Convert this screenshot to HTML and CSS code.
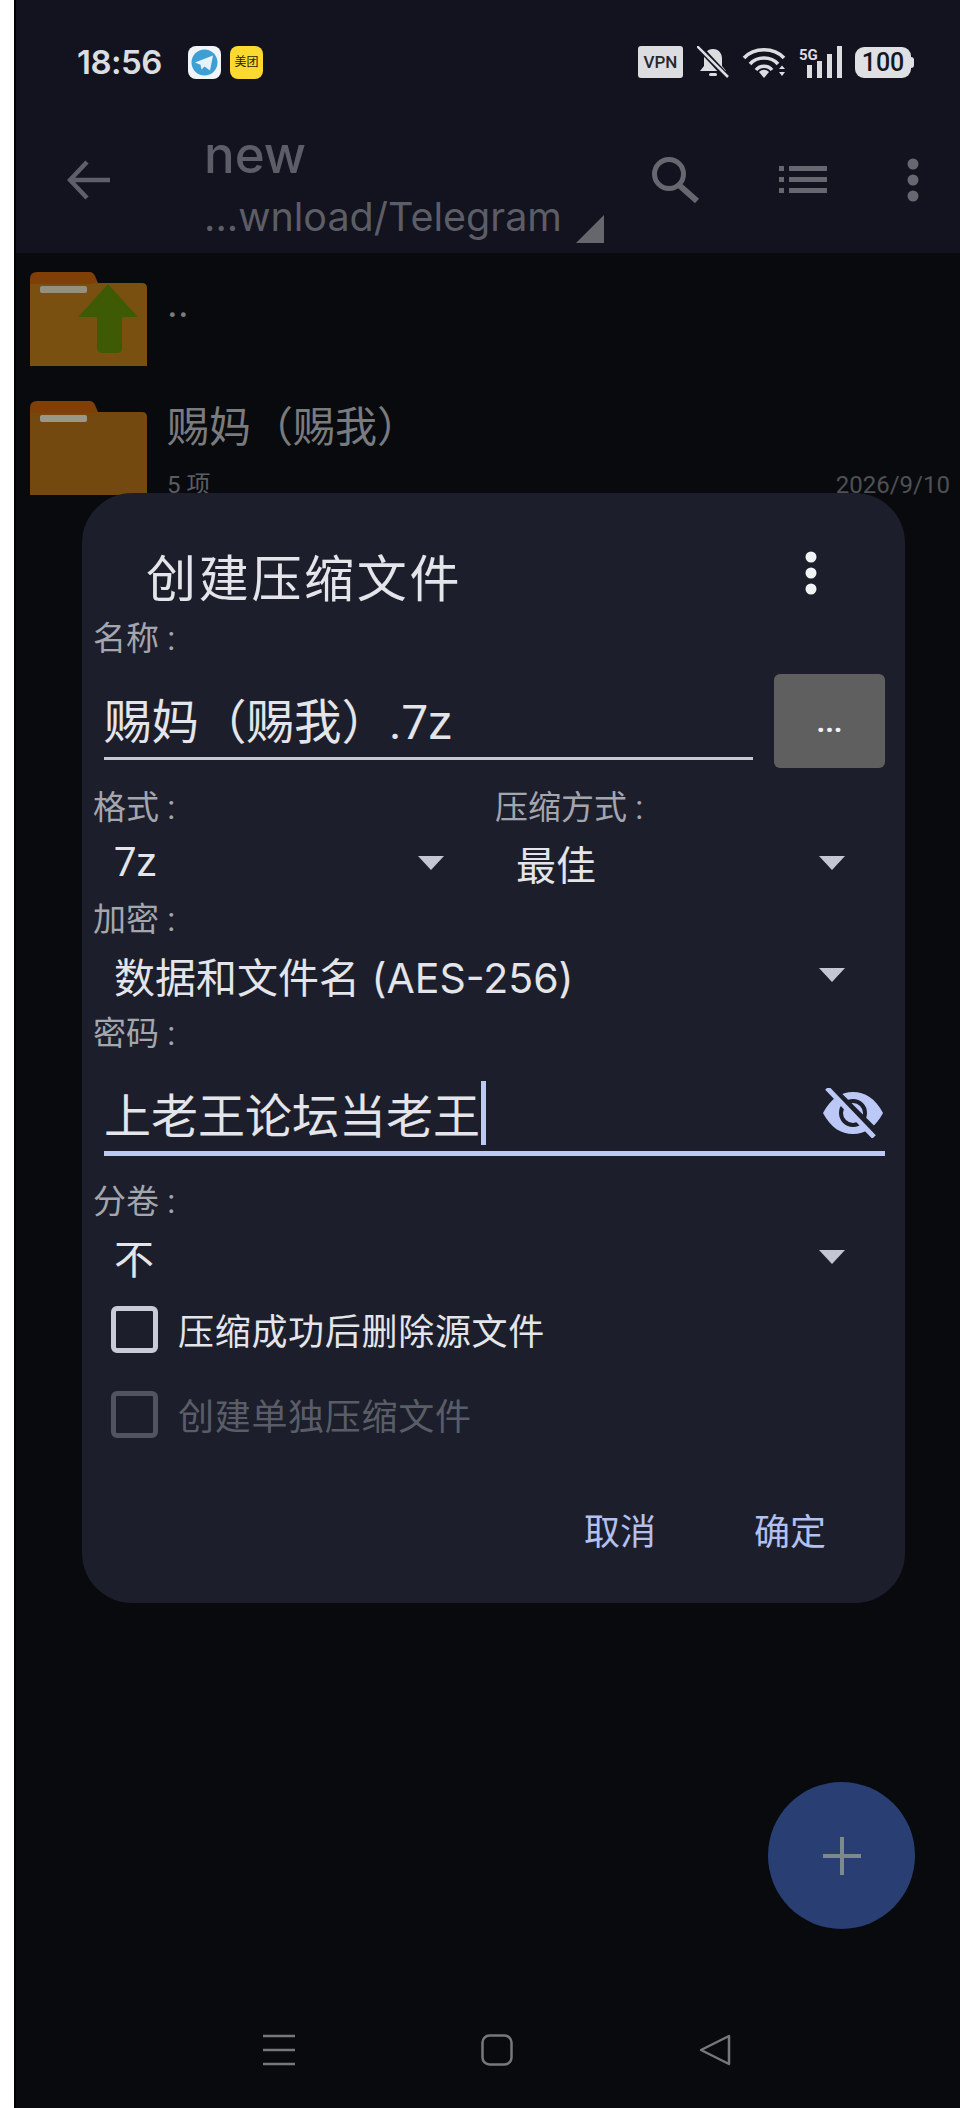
FILE: index.html
```html
<!DOCTYPE html>
<html lang="zh-CN">
<head>
    <meta charset="UTF-8">
    <meta name="viewport" content="width=device-width, initial-scale=1.0">
    <title>创建压缩文件</title>
    <link rel="stylesheet" href="styles.css">
</head>
<body>
    <div class="phone">
        <header class="appbar">
            <div class="status">
                <span class="time">18:56</span>
                <svg class="app-icon" viewBox="0 0 33 33">
                    <rect width="33" height="33" rx="8" fill="#f2f5f8"/>
                    <circle cx="16.5" cy="16.5" r="13" fill="#3f9fd4"/>
                    <path d="M7 16.5 25 9.5 22 24.5 16.5 20.5 13.5 23.5 12.5 18.8Z" fill="#e8f3f9"/>
                </svg>
                <span class="meituan">美团</span>
                <div class="status-right">
                    <span class="vpn">VPN</span>
                    <svg class="bell" viewBox="0 0 32 32">
                        <path d="M16 3c-6 0-9 4.500-9 10v7l-4 5h26l-4-5v-7c0-5.500-3-10-9-10Z" fill="#dcdde1"/>
                        <rect x="12" y="27" width="8" height="3" rx="1.500" fill="#dcdde1"/>
                        <path d="M1 0 31 32" stroke="#12131e" stroke-width="6"/>
                        <path d="M0 0 31 31" stroke="#dcdde1" stroke-width="2.500"/>
                    </svg>
                    <svg class="wifi" viewBox="0 0 45 32" fill="none" stroke="#dcdde1" stroke-width="3.500">
                        <path d="M2 12C12 1 32 1 42 12"/>
                        <path d="M8 18C15 10 29 10 36 18"/>
                        <path d="M14 24C18 19 26 19 30 24"/>
                        <path d="M17 26 22 32 27 26C24 23 20 23 17 26Z" fill="#dcdde1" stroke="none"/>
                        <path d="M37 23 40 19.500 43 23ZM37 26 40 30 43 26Z" fill="#dcdde1" stroke="none"/>
                    </svg>
                    <svg class="signal" viewBox="0 0 43 32">
                        <text x="0" y="14" class="signal-label">5G</text>
                        <rect x="8" y="19" width="5" height="13" fill="#dcdde1"/>
                        <rect x="18" y="15" width="5" height="17" fill="#dcdde1"/>
                        <rect x="28" y="8" width="5" height="24" fill="#dcdde1"/>
                        <rect x="38" y="0" width="5" height="32" fill="#dcdde1"/>
                    </svg>
                    <span class="battery">100</span>
                </div>
            </div>
            <div class="toolbar">
                <svg class="back" viewBox="0 0 43 40" fill="none" stroke="#5e5f68" stroke-width="4.500">
                    <path d="M43 20H4M20 2 3 20 20 38"/>
                </svg>
                <div class="path">
                    <div class="path-name">new</div>
                    <div class="path-dir">...wnload/Telegram</div>
                </div>
                <svg class="path-corner" viewBox="0 0 28 28"><path d="M28 0V28H0Z" fill="#66676c"/></svg>
                <svg class="search" viewBox="0 0 47 47" fill="none" stroke="#66676f" stroke-width="5">
                    <circle cx="17" cy="18" r="14.500"/>
                    <path d="M27 29 45 45" stroke-width="6"/>
                </svg>
                <svg class="view-list" viewBox="0 0 48 27" fill="#66676f">
                    <rect y="0" width="5" height="5"/><rect x="10" y="0" width="38" height="5"/>
                    <rect y="11" width="5" height="5"/><rect x="10" y="11" width="38" height="5"/>
                    <rect y="22" width="5" height="5"/><rect x="10" y="22" width="38" height="5"/>
                </svg>
                <svg class="more" viewBox="0 0 12 44" fill="#66676f">
                    <circle cx="6" cy="6" r="5.500"/><circle cx="6" cy="22" r="5.500"/><circle cx="6" cy="38" r="5.500"/>
                </svg>
            </div>
        </header>

        <main class="files">
            <div class="file-row">
                <svg class="folder" viewBox="0 0 117 94">
                    <path d="M0 7Q0 0 7 0H60Q63 0 65 4L68 11V30H0Z" fill="#7f3f06"/>
                    <path d="M0 25V12H60L66 11H112Q117 11 117 16V94H0Z" fill="#7a5011"/>
                    <rect x="10" y="14" width="47" height="7" rx="2" fill="#958f7c"/>
                    <path d="M78 12 108 45H92V76Q92 81 87 81H73Q67 81 67 76V45H48Z" fill="#3f5a05"/>
                </svg>
                <div class="file-text file-up">
                    <div class="file-name">..</div>
                </div>
            </div>
            <div class="file-row">
                <svg class="folder" viewBox="0 0 117 94">
                    <path d="M0 7Q0 0 7 0H60Q63 0 65 4L68 11V30H0Z" fill="#7f3f06"/>
                    <path d="M0 25V12H60L66 11H112Q117 11 117 16V94H0Z" fill="#74490f"/>
                    <rect x="10" y="14" width="47" height="7" rx="2" fill="#9a9688"/>
                </svg>
                <div class="file-text">
                    <div class="file-name">赐妈（赐我）</div>
                    <div class="file-meta">
                        <span>5 项</span>
                        <span class="file-date">2026/9/10</span>
                    </div>
                </div>
            </div>
        </main>

        <button class="fab" type="button">
            <svg viewBox="0 0 38 38" fill="none" stroke="#7c8a8c" stroke-width="4"><path d="M19 0V38M0 19H38"/></svg>
        </button>

        <nav class="navbar">
            <svg class="nav-icon" viewBox="0 0 32 32" fill="none" stroke="#77787c" stroke-width="2.500">
                <path d="M0 2H32M0 16H32M0 30H32"/>
            </svg>
            <svg class="nav-icon" viewBox="0 0 32 32" fill="none" stroke="#77787c" stroke-width="2.500">
                <rect x="1.500" y="1.500" width="29" height="29" rx="7"/>
            </svg>
            <svg class="nav-icon" viewBox="0 0 32 32" fill="none" stroke="#77787c" stroke-width="2.500" stroke-linejoin="round">
                <path d="M30 2 2 16 30 30Z"/>
            </svg>
        </nav>

        <section class="dialog">
            <div class="dialog-head">
                <h2 class="dialog-title">创建压缩文件</h2>
                <svg class="dialog-more" viewBox="0 0 12 44" fill="#f2f3f5">
                    <circle cx="6" cy="6" r="5.500"/><circle cx="6" cy="22" r="5.500"/><circle cx="6" cy="38" r="5.500"/>
                </svg>
            </div>

            <div class="label">名称 :</div>
            <div class="name-row">
                <div class="field">赐妈（赐我）.7z</div>
                <button class="browse" type="button">...</button>
            </div>

            <div class="two-col">
                <div>
                    <div class="label">格式 :</div>
                    <div class="select"><span>7z</span><i class="caret"></i></div>
                </div>
                <div>
                    <div class="label">压缩方式 :</div>
                    <div class="select"><span>最佳</span><i class="caret"></i></div>
                </div>
            </div>

            <div class="label">加密 :</div>
            <div class="select select-long"><span>数据和文件名 (AES-256)</span><i class="caret"></i></div>

            <div class="label label-password">密码 :</div>
            <div class="password">
                <span>上老王论坛当老王</span>
                <span class="cursor"></span>
                <svg class="eye" viewBox="0 0 60 50">
                    <path d="M0 25C8 10 18 4 30 4S52 10 60 25C52 40 42 46 30 46S8 40 0 25Z" fill="#bcc8f5"/>
                    <circle cx="30" cy="25" r="12" fill="none" stroke="#1c1f2b" stroke-width="4"/>
                    <path d="M3 -4 54 47" stroke="#1c1f2b" stroke-width="9"/>
                    <path d="M4 0 51 49" stroke="#bcc8f5" stroke-width="5"/>
                </svg>
            </div>

            <div class="label label-split">分卷 :</div>
            <div class="select"><span>不</span><i class="caret"></i></div>

            <label class="check">
                <span class="box"></span>
                <span>压缩成功后删除源文件</span>
            </label>
            <label class="check check-off">
                <span class="box"></span>
                <span>创建单独压缩文件</span>
            </label>

            <div class="actions">
                <span>取消</span>
                <span>确定</span>
            </div>
        </section>
    </div>
</body>
</html>
```

FILE: styles.css
```css
* {
    box-sizing: border-box;
}
body {
    margin: 0;
    background-color: #fff;
    font-family: Roboto, "Noto Sans CJK SC", sans-serif;
}
.phone {
    position: relative;
    display: flex;
    flex-direction: column;
    width: 946px;
    height: 2108px;
    margin-left: 14px;
    border-left: 2px solid #000;
    background-color: #090a0e;
    overflow: hidden;
}
.appbar {
    height: 253px;
    background-color: #12131e;
}
.status {
    display: flex;
    align-items: center;
    height: 124px;
    padding-left: 61px;
}
.time {
    width: 111px;
    font-family: Inter, sans-serif;
    font-size: 33px;
    font-weight: 600;
    letter-spacing: -0.5px;
    color: #dcdde1;
}
.app-icon {
    width: 33px;
    height: 33px;
}
.meituan {
    width: 33px;
    height: 33px;
    margin-left: 9px;
    border-radius: 8px;
    background-color: #fbd92f;
    color: #2a2500;
    font-size: 12px;
    line-height: 33px;
    text-align: center;
    white-space: nowrap;
}
.status-right {
    display: flex;
    align-items: center;
    margin-left: auto;
    margin-right: 46px;
}
.vpn {
    width: 45px;
    height: 32px;
    border-radius: 3px;
    background-color: #dcdde1;
    color: #26272c;
    font-size: 17px;
    font-weight: 500;
    line-height: 32px;
    text-align: center;
}
.bell {
    width: 32px;
    height: 32px;
    margin-left: 14px;
}
.wifi {
    width: 45px;
    height: 32px;
    margin-left: 13px;
}
.signal {
    width: 43px;
    height: 32px;
    margin-left: 12px;
}
.signal-label {
    font-family: Roboto, sans-serif;
    font-size: 15px;
    font-weight: 700;
    fill: #dcdde1;
}
.battery {
    position: relative;
    width: 56px;
    height: 31px;
    margin-left: 13px;
    margin-right: 3px;
    border-radius: 9px;
    background-color: #dfe0e4;
    color: #16171c;
    font-size: 25px;
    font-weight: 500;
    line-height: 31px;
    text-align: center;
}
.battery::after {
    content: "";
    position: absolute;
    top: 10px;
    right: -3px;
    width: 3px;
    height: 11px;
    border-radius: 0 3px 3px 0;
    background-color: #dfe0e4;
}
.toolbar {
    display: flex;
    align-items: flex-start;
    height: 129px;
    padding-left: 51px;
}
.back {
    width: 43px;
    height: 40px;
    margin-top: 36px;
}
.path {
    width: 372px;
    margin-left: 94px;
    color: #5c5d67;
}
.path-name {
    height: 60px;
    padding-top: 2px;
    font-family: Inter, sans-serif;
    font-size: 51px;
    font-weight: 500;
    line-height: 58px;
}
.path-dir {
    margin-top: 5px;
    font-family: Inter, sans-serif;
    font-size: 39.500px;
    line-height: 56px;
    white-space: nowrap;
}
.path-corner {
    width: 28px;
    height: 28px;
    margin-top: 91px;
}
.search {
    width: 47px;
    height: 47px;
    margin-top: 32px;
    margin-left: 48px;
}
.view-list {
    width: 48px;
    height: 27px;
    margin-top: 42px;
    margin-left: 80px;
}
.more {
    width: 12px;
    height: 44px;
    margin-top: 34px;
    margin-left: 80px;
}
.files {
    flex: 1;
    padding: 19px 10px 0 14px;
}
.file-row {
    display: flex;
    height: 129px;
}
.folder {
    width: 117px;
    height: 94px;
    flex: none;
}
.file-text {
    flex: 1;
    margin-left: 20px;
}
.file-up {
    padding-top: 4px;
}
.file-name {
    height: 66px;
    color: #7a7b7e;
    font-size: 42px;
    line-height: 54px;
}
.file-meta {
    display: flex;
    justify-content: space-between;
    color: #5b5c60;
    font-size: 24px;
    line-height: 36px;
}
.file-date {
    color: #4f5054;
}
.fab {
    position: absolute;
    top: 1782px;
    left: 752px;
    display: flex;
    align-items: center;
    justify-content: center;
    width: 147px;
    height: 147px;
    padding: 0;
    border: none;
    border-radius: 50%;
    background-color: #293f73;
}
.fab svg {
    width: 38px;
    height: 38px;
}
.navbar {
    display: flex;
    align-items: center;
    gap: 186px;
    height: 116px;
    padding-left: 247px;
}
.nav-icon {
    width: 32px;
    height: 32px;
}
.dialog {
    position: absolute;
    top: 493px;
    left: 66px;
    width: 823px;
    height: 1110px;
    padding: 55px 20px 0 11px;
    border-radius: 50px;
    background-color: #1c1f2b;
    color: #e4e5ea;
}
.dialog-head {
    display: flex;
    justify-content: space-between;
    height: 60px;
    margin-bottom: 11px;
    padding-left: 53px;
}
.dialog-title {
    margin: 0;
    padding-top: 2px;
    font-size: 50px;
    font-weight: 400;
    letter-spacing: 2.700px;
    line-height: 60px;
}
.dialog-more {
    width: 12px;
    height: 44px;
    margin-top: 3px;
    margin-right: 68px;
}
.label {
    height: 40px;
    color: #a4a6ae;
    font-size: 33px;
    line-height: 40px;
}
.name-row {
    display: flex;
    align-items: flex-start;
    gap: 21px;
    height: 94px;
    margin-top: 15px;
    margin-bottom: 20px;
}
.field {
    width: 649px;
    height: 86px;
    margin-left: 11px;
    padding-top: 19px;
    border-bottom: 3px solid #c6c8d2;
    font-size: 47.500px;
    line-height: 60px;
}
.browse {
    width: 111px;
    height: 94px;
    padding: 0;
    border: none;
    border-radius: 6px;
    background-color: #5f5f60;
    color: #f2f2f2;
    font-family: Roboto, sans-serif;
    font-size: 30px;
    font-weight: 700;
}
.two-col {
    display: grid;
    grid-template-columns: 391px 390px;
    gap: 11px;
}
.select {
    display: flex;
    align-items: center;
    justify-content: space-between;
    height: 72px;
    padding: 0 40px 3px 21px;
    font-size: 40px;
}
.select-long {
    font-family: Inter, "Noto Sans CJK SC", sans-serif;
    font-size: 41px;
}
.caret {
    width: 0;
    height: 0;
    border-top: 14px solid #c5c6d4;
    border-left: 13px solid transparent;
    border-right: 13px solid transparent;
}
.label-password {
    margin-top: 2px;
}
.password {
    display: flex;
    align-items: center;
    height: 102px;
    margin-left: 11px;
    padding-top: 20px;
    border-bottom: 5px solid #bcc8f5;
    font-size: 47px;
}
.cursor {
    width: 5px;
    height: 64px;
    margin-left: 1px;
    background-color: #bcc8f5;
}
.eye {
    width: 60px;
    height: 50px;
    margin-left: auto;
    margin-right: 2px;
}
.label-split {
    margin-top: 26px;
}
.check {
    display: flex;
    align-items: center;
    gap: 20px;
    height: 47px;
    margin-top: 12px;
    margin-left: 18px;
    padding-bottom: 1px;
    font-size: 36px;
    letter-spacing: 0.700px;
}
.box {
    flex: none;
    width: 47px;
    height: 47px;
    border: 5px solid #c9cbd6;
    border-radius: 6px;
}
.check-off {
    margin-top: 38px;
    color: #5a5d68;
}
.check-off .box {
    border-color: #515460;
}
.actions {
    display: flex;
    justify-content: flex-end;
    gap: 98px;
    margin-top: 75px;
    padding-right: 59px;
    color: #b3c0f0;
    font-size: 36px;
    line-height: 40px;
}
```
